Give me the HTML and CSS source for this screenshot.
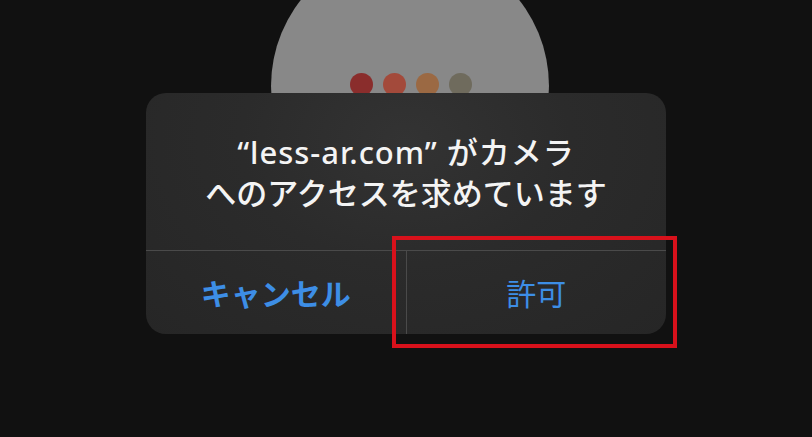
FILE: index.html
```html
<!DOCTYPE html>
<html lang="ja">
<head>
    <meta charset="UTF-8">
    <title>カメラへのアクセス</title>
    <link rel="stylesheet" href="styles.css">
</head>
<body>
    <div class="stage">
        <!-- 背景のカメラ画面 -->
        <div class="lens">
            <div class="dots">
                <span class="dot dot1"></span>
                <span class="dot dot2"></span>
                <span class="dot dot3"></span>
                <span class="dot dot4"></span>
            </div>
        </div>
        <div class="alert">
            <div class="message">
                <p class="first">“less-ar.com” がカメラ</p>
                <p>へのアクセスを求めています</p>
            </div>
            <div class="buttons">
                <div class="btn cancel">キャンセル</div>
                <div class="btn allow">許可</div>
            </div>
        </div>
        <!-- 許可ボタンの赤枠 -->
        <div class="mark"></div>
    </div>
</body>
</html>
```

FILE: styles.css
```css
* {
    margin: 0;
    padding: 0;
    box-sizing: border-box;
}

body {
    background-color: #111111;
    font-family: "Noto Sans", "Noto Sans CJK JP", sans-serif;
    overflow: hidden;
}

.stage {
    position: relative;
    width: 812px;
    height: 437px;
    padding-top: 93px;
}

.lens {
    position: absolute;
    left: 271px;
    top: -53px;
    width: 278px;
    height: 278px;
    border-radius: 50%;
    background-color: #888888;
}

.dots {
    display: flex;
    justify-content: center;
    gap: 10px;
    padding-top: 126px;
    padding-left: 2px;
}

.dot {
    width: 23px;
    height: 23px;
    border-radius: 50%;
}

.dot1 { background-color: #8a2d2c; }
.dot2 { background-color: #a34a3b; }
.dot3 { background-color: #9b6943; }
.dot4 { background-color: #6f6b5d; }

.alert {
    position: relative;
    width: 520px;
    height: 241px;
    margin: 0 auto;
    border-radius: 20px;
    background: radial-gradient(ellipse at 50% 20%, #333333 0%, #2b2b2b 45%, #262626 100%);
    display: flex;
    flex-direction: column;
}

.message {
    height: 157px;
    display: flex;
    flex-direction: column;
    justify-content: center;
    align-items: center;
    padding-top: 2px;
    color: #f4f4f4;
    font-size: 31px;
    font-weight: 500;
    line-height: 41px;
    text-align: center;
}

.message .first {
    letter-spacing: 1px;
}

.buttons {
    flex: 1;
    display: flex;
    border-top: 1px solid #4a4a4a;
}

.btn {
    flex: 1;
    display: flex;
    justify-content: center;
    align-items: center;
    padding-bottom: 2px;
    color: #3d8ee6;
    font-size: 30px;
}

.cancel {
    font-weight: bold;
    border-right: 1px solid #4a4a4a;
}

.mark {
    position: absolute;
    left: 392px;
    top: 236px;
    width: 285px;
    height: 112px;
    border: 4px solid #d8111b;
}
```
